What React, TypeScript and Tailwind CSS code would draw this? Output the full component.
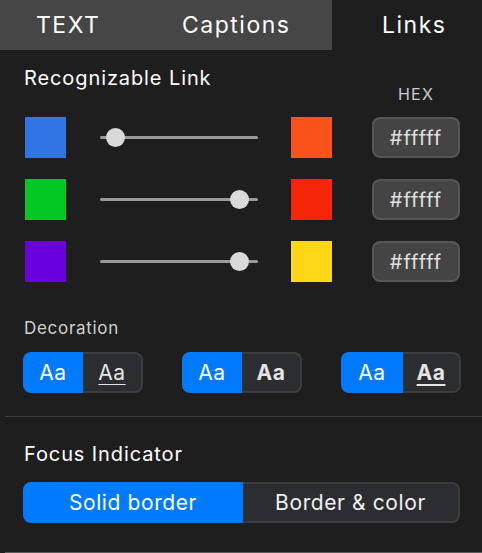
import React from "react";

const rows = [
  { left: "bg-[#3174e6]", right: "bg-[#fa5219]", thumb: 15, hex: "#fffff" },
  { left: "bg-[#03c823]", right: "bg-[#f52508]", thumb: 139, hex: "#fffff" },
  { left: "bg-[#6a00dd]", right: "bg-[#fed817]", thumb: 139, hex: "#fffff" },
];

function Slider({ pos }: { pos: number }) {
  return (
    <div className="relative w-[158px] h-[19px] flex items-center">
      <div className="w-full h-[3px] rounded-full bg-[#9a9a9a]" />
      <div
        className="absolute top-0 w-[19px] h-[19px] rounded-full bg-[#d9d9d9]"
        style={{ left: pos - 9.5 }}
      />
    </div>
  );
}

function Toggle({ blueWidth, right }: { blueWidth: string; right: React.ReactNode }) {
  return (
    <div className="flex w-[120px] h-[41px] text-[21px] tracking-[0.5px]">
      <div className={`${blueWidth} h-full rounded-l-lg bg-[#007aff] flex items-center justify-center text-white`}>
        Aa
      </div>
      <div className="flex-1 h-full rounded-r-lg bg-[#2c2d30] border-2 border-l-0 border-[#3c3d40] flex items-center justify-center text-[#e4e4e4]">
        {right}
      </div>
    </div>
  );
}

export default function App() {
  return (
    <div
      className="w-[482px] h-[553px] bg-[#1e1e1e] text-white flex flex-col"
      style={{ fontFamily: "Inter, 'Noto Sans', sans-serif" }}
    >
      {/* tabs */}
      <div className="flex h-[50px] text-[23px] tracking-[1.5px]">
        <div className="w-[166px] bg-[#464646] flex items-center pl-[36px]">TEXT</div>
        <div className="w-[166px] bg-[#464646] flex items-center pl-[16px]">Captions</div>
        <div className="flex-1 flex items-center pl-[50px]">Links</div>
      </div>

      <div className="flex items-start">
        <div className="ml-[24px] mt-[16px] text-[20px] leading-6 tracking-[0.9px] w-[348px]">Recognizable Link</div>
        <div className="mt-[34px] w-[88px] text-center text-[16px] leading-5 tracking-[1.2px] text-[#cccccc]">HEX</div>
      </div>

      <div className="mt-[13px] flex flex-col gap-[21px]">
        {rows.map((r, i) => (
          <div key={i} className="flex items-center h-[41px] pl-[25px]">
            <div className={`w-[41px] h-[41px] ${r.left}`} />
            <div className="ml-[34px]">
              <Slider pos={r.thumb} />
            </div>
            <div className={`ml-[33px] w-[41px] h-[41px] ${r.right}`} />
            <div className="ml-[40px] w-[88px] h-[41px] rounded-lg bg-[#444444] border-2 border-[#565656] flex items-center justify-center text-[20px] tracking-[1px] text-[#e0e0e0]">
              {r.hex}
            </div>
          </div>
        ))}
      </div>

      <div className="mt-[36px] ml-[24px] text-[17px] leading-5 tracking-[0.7px] text-[#d0d0d0]">Decoration</div>

      <div className="mt-[14px] pl-[23px] flex gap-[39px]">
        <Toggle blueWidth="w-[60px]" right={<span className="underline underline-offset-4 decoration-1">Aa</span>} />
        <Toggle blueWidth="w-[60px]" right={<span className="font-bold">Aa</span>} />
        <Toggle blueWidth="w-[62px]" right={<span className="font-bold underline underline-offset-4 decoration-2">Aa</span>} />
      </div>

      <div className="mt-[23px] ml-[5px] h-px bg-[#3c3c3c]" />

      <div className="mt-[25px] ml-[24px] text-[20px] leading-6 tracking-[0.9px]">Focus Indicator</div>

      <div className="mt-[16px] ml-[23px] w-[437px] h-[41px] flex text-[21px] tracking-[0.6px]">
        <div className="w-[220px] h-full rounded-l-lg bg-[#007aff] flex items-center justify-center">Solid border</div>
        <div className="flex-1 h-full rounded-r-lg bg-[#2c2d30] border-2 border-l-0 border-[#3c3d40] flex items-center justify-center text-[#f0f0f0]">
          Border &amp; color
        </div>
      </div>

      <div className="mt-auto ml-[5px] h-px bg-[#5a5a5a]" />
    </div>
  );
}
